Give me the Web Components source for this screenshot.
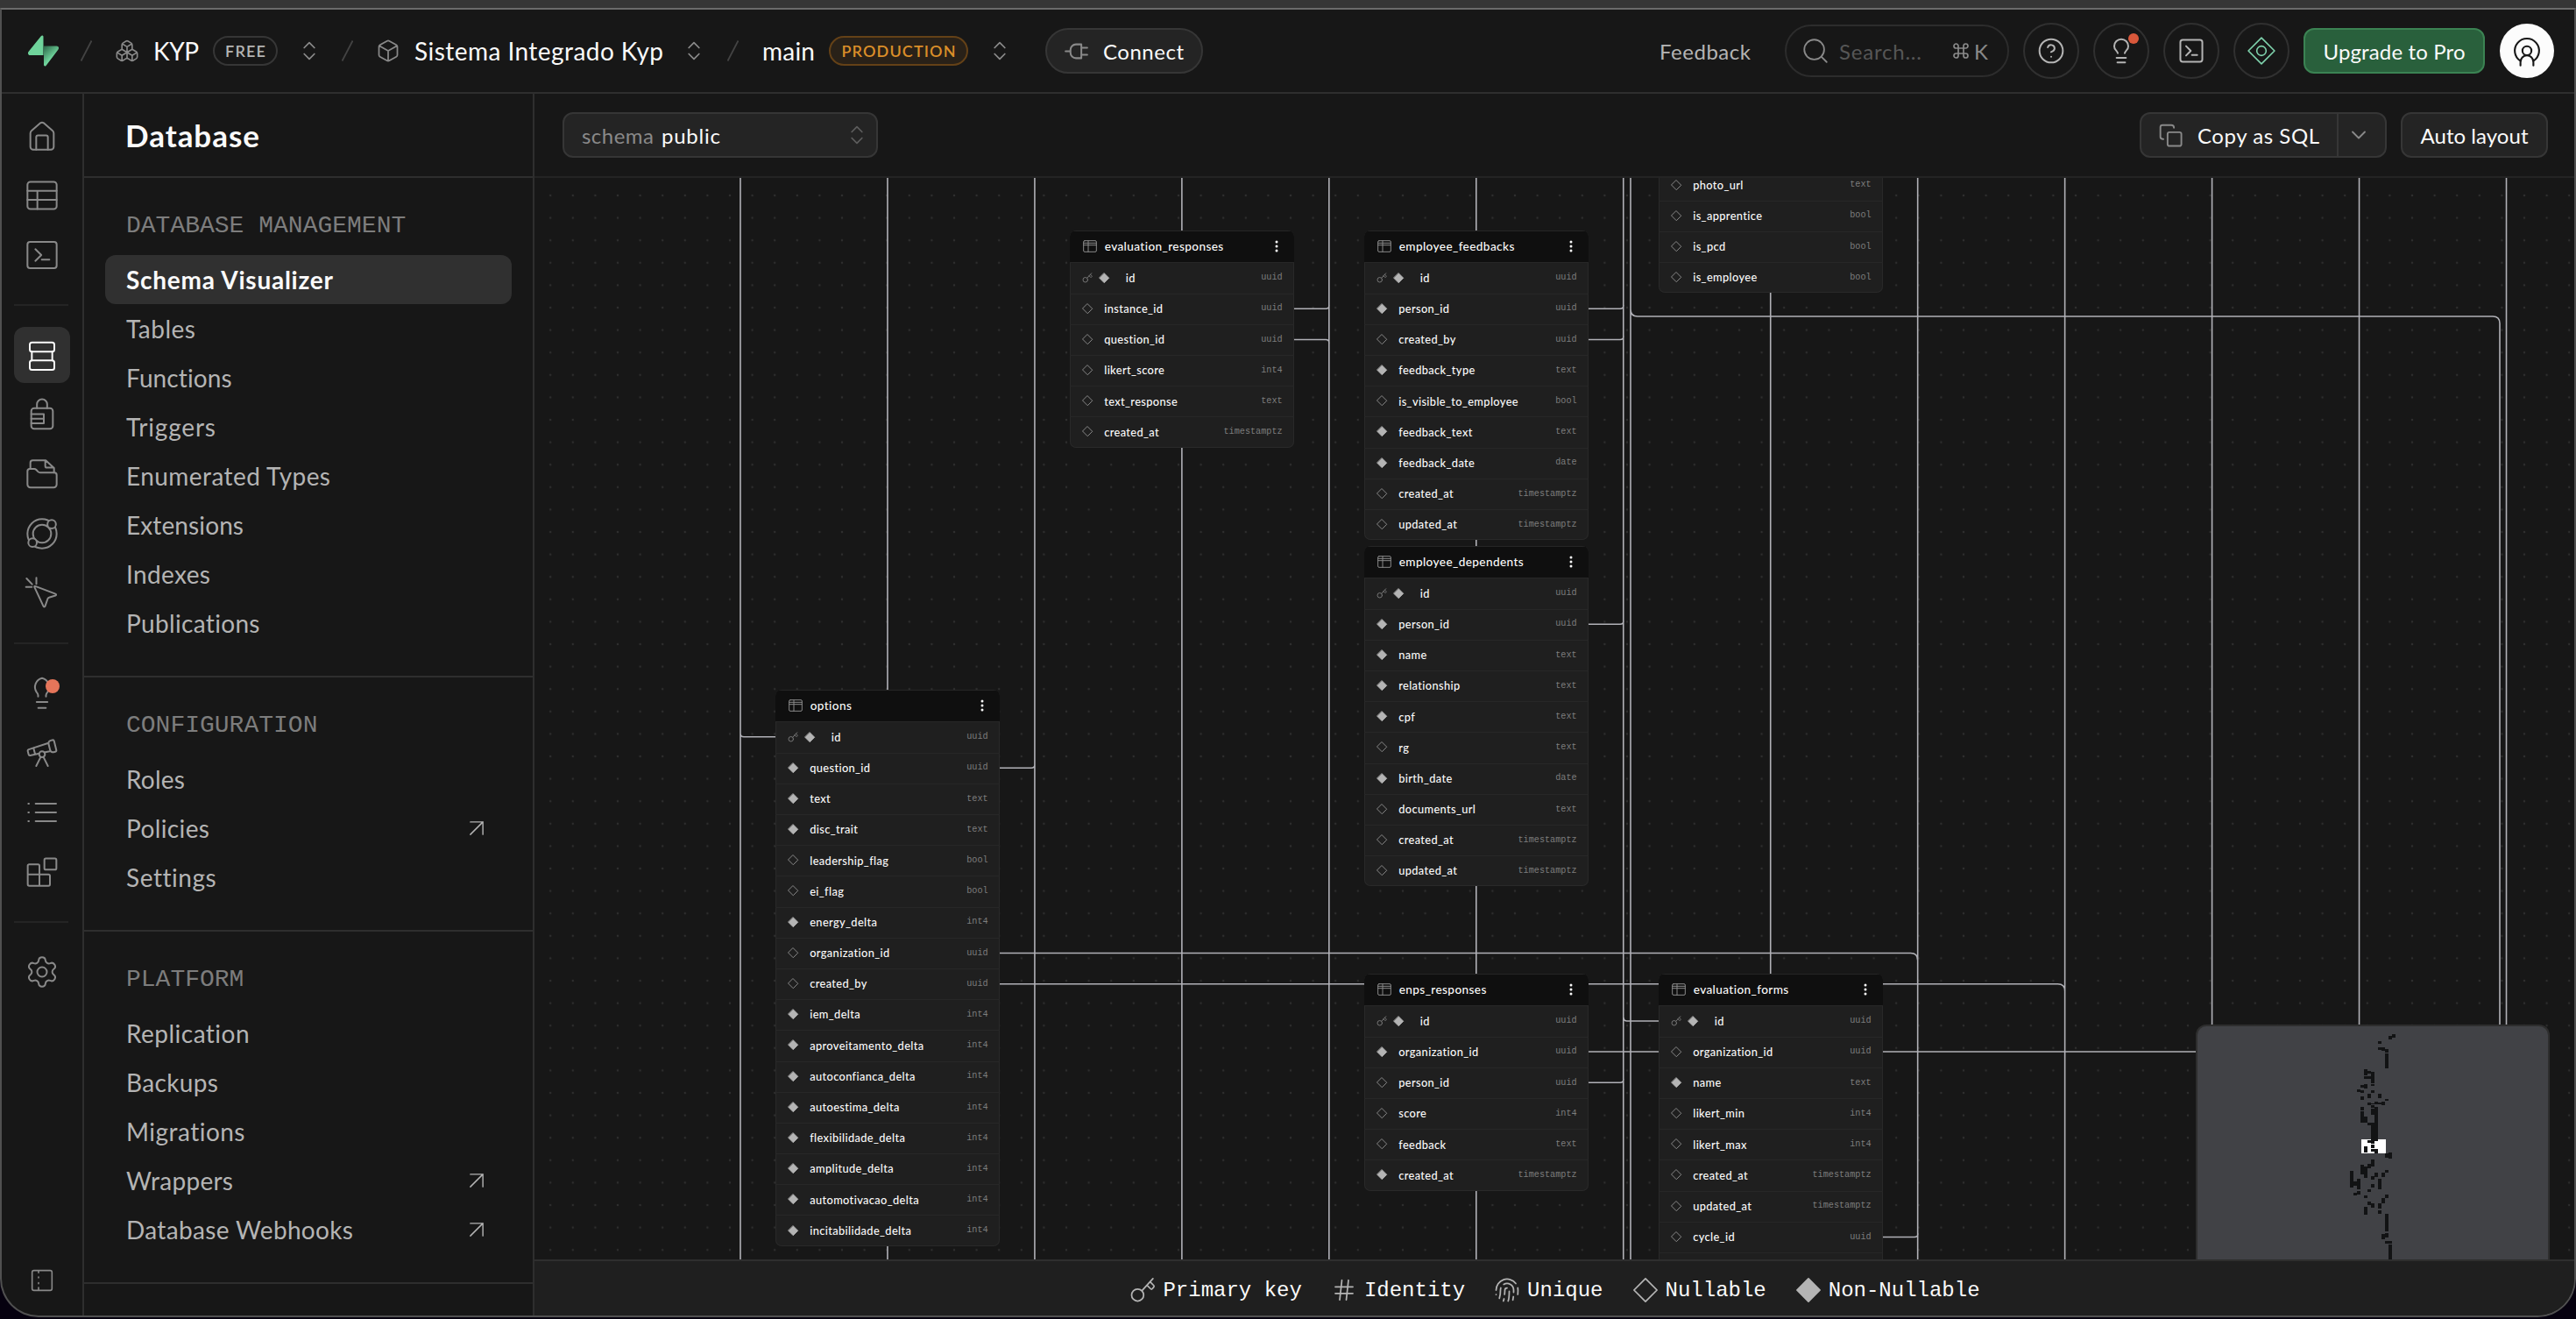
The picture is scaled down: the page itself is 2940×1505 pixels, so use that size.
<!DOCTYPE html>
<html lang="en">
<head>
<meta charset="utf-8">
<title>Schema Visualizer</title>
<style>
  html, body {
    margin: 0;
    height: 100%;
    overflow: hidden;
    background: #06010f;
    color: #fafafa;
    font-family: Lato, "Open Sans", sans-serif;
  }
</style>
</head>
<body>
<studio-app></studio-app>

<script>
// 24x24 icon set, drawn with currentColor strokes
const DOOR = "M4 10.2c0-.7.3-1.3.9-1.8l6-5.2c.7-.5 1.5-.5 2.2 0l6 5.2c.6.5.9 1.1.9 1.8v9.3a2 2 0 0 1-2 2H6a2 2 0 0 1-2-2z";
const ICONS = {
  home: `<path d="${DOOR}"/><path d="M8 21.5v-8.6a1.2 1.2 0 0 1 1.2-1.2h5.6a1.2 1.2 0 0 1 1.2 1.2v8.6"/>`,
  table: `<rect x="2" y="2.7" width="20" height="18.6" rx="2"/><path d="M2 8.8h20M2 15h20M8.8 8.8v12.5"/>`,
  terminal: `<rect x="2" y="3" width="20" height="18" rx="1.8"/><path d="m7.4 8 4.1 4-4.1 4M11.8 15.2H17"/>`,
  database: `<rect x="3.6" y="3.4" width="16.8" height="6.4" rx="1.5"/><rect x="3.6" y="15.8" width="16.8" height="6.4" rx="1.5"/><path d="M5 9.8v6M19 9.8v6"/>`,
  lock: `<rect x="4.6" y="7.6" width="14.8" height="14.2" rx="2"/><path d="M8.5 7.6V5a3.5 3.5 0 0 1 7 0v2.6M4.6 11.7h8.6v6.3H4.6M4.6 14.9h8.6"/>`,
  folder: `<path d="M2 10c0-.9.7-1.6 1.6-1.6h3c.6 0 1 .2 1.4.6l1.2 1.3c.4.4.9.7 1.5.7h9.7c.9 0 1.6.7 1.6 1.6v6.5a2 2 0 0 1-2 2H4a2 2 0 0 1-2-2z"/><path d="M4 8.4V4.2c0-.9.7-1.6 1.6-1.6h8.9l5.7 5.2V11M14.2 2.6v3.8c0 .6.5 1.1 1.1 1.1h4.7"/>`,
  realtime: `<circle cx="12" cy="12" r="10"/><circle cx="12" cy="12" r="6.2"/><circle cx="18.6" cy="5.5" r="2.9" fill="#171717"/><circle cx="5.5" cy="18.1" r="2.9" fill="#171717"/>`,
  cursor: `<path d="m1.4 1.8 3.8 4M8.1 1.3v4.3M1 7.7h4M7.4 7.1l13.8 5.3c.6.2.6.9 0 1.1l-4.4 1.3c-.4.1-.7.4-.9.8l-1.8 5.2c-.2.6-1 .6-1.2 0L6.8 7.7c-.2-.4.2-.8.6-.6z"/>`,
  bulb: `<path d="M9.3 14.3v-.9c0-.8-.4-1.5-1-2.1A6.3 6.3 0 0 1 12 1.6a6.3 6.3 0 0 1 3.7 9.7c-.6.6-1 1.3-1 2.1v.9M8.3 18h7.4M9.4 22h5.2"/>`,
  telescope: `<path d="m10.065 12.493-6.18 1.318a.934.934 0 0 1-1.108-.702l-.537-2.15a1.07 1.07 0 0 1 .691-1.265l13.504-4.44M13.56 11.747l4.332-.924M16 21l-3.105-6.21M16.485 5.94a2 2 0 0 1 1.455-2.425l1.09-.272a1 1 0 0 1 1.212.727l1.515 6.06a1 1 0 0 1-.727 1.213l-1.09.272a2 2 0 0 1-2.425-1.455zM6.158 8.633l1.114 4.456M8 21l3.105-6.21"/><circle cx="12" cy="13" r="2"/>`,
  list: `<path d="M2.6 6h.4M2.6 12h.4M2.6 18h.4M7.6 6h14M7.6 12h14M7.6 18h14"/>`,
  blocks: `<rect x="13.6" y="2.7" width="8.2" height="7.7" rx="1"/><path d="M10.2 21.4V7.7a1 1 0 0 0-1-1H3.2a1 1 0 0 0-1 1v12.7a1 1 0 0 0 1 1h13.2a1 1 0 0 0 1-1v-5.7a1 1 0 0 0-1-1H2.2"/>`,
  gear: `<path d="M9.671 4.136a2.34 2.34 0 0 1 4.659 0 2.34 2.34 0 0 0 3.319 1.915 2.34 2.34 0 0 1 2.33 4.033 2.34 2.34 0 0 0 0 3.831 2.34 2.34 0 0 1-2.33 4.033 2.34 2.34 0 0 0-3.319 1.915 2.34 2.34 0 0 1-4.659 0 2.34 2.34 0 0 0-3.32-1.915 2.34 2.34 0 0 1-2.33-4.033 2.34 2.34 0 0 0 0-3.831A2.34 2.34 0 0 1 6.35 6.051a2.34 2.34 0 0 0 3.319-1.915"/><circle cx="12" cy="12" r="3.3"/>`,
  panel: `<rect x="3.5" y="3.5" width="17" height="17" rx="1.6"/><path d="M9 14v.8M9 18v2.4M9 3.6v1.8M9 9v.8"/>`,
  boxes: `<path d="M2.97 12.92A2 2 0 0 0 2 14.63v3.24a2 2 0 0 0 .97 1.71l3 1.8a2 2 0 0 0 2.06 0L12 19v-5.5l-5-3zM7 16.5l-4.74-2.85M7 16.5l5-3M7 16.5v5.17M12 13.5V19l3.97 2.38a2 2 0 0 0 2.06 0l3-1.8a2 2 0 0 0 .97-1.71v-3.24a2 2 0 0 0-.97-1.71L17 10.5zM17 16.5l-5-3M17 16.5l4.74-2.85M17 16.5v5.17M7.97 4.42A2 2 0 0 0 7 6.13v4.37l5 3 5-3V6.13a2 2 0 0 0-.97-1.71l-3-1.8a2 2 0 0 0-2.06 0zM12 8 7.26 5.15M12 8l4.74-2.85M12 13.5V8"/>`,
  cube: `<path d="M21 8a2 2 0 0 0-1-1.73l-7-4a2 2 0 0 0-2 0l-7 4A2 2 0 0 0 3 8v8a2 2 0 0 0 1 1.73l7 4a2 2 0 0 0 2 0l7-4A2 2 0 0 0 21 16zM3.3 7l8.7 5 8.7-5M12 22V12"/>`,
  updown: `<path d="m7 15 5 5 5-5M7 9l5-5 5 5"/>`,
  down: `<path d="m6 9 6 6 6-6"/>`,
  plug: `<path d="M1 12h5M17 5v14h-5.5a5.5 5.5 0 0 1-5.5-5.5v-3a5.5 5.5 0 0 1 5.5-5.5zM17 8.5h6M17 15.5h6"/>`,
  search: `<circle cx="11" cy="11" r="8"/><path d="m21 21-4.3-4.3"/>`,
  help: `<circle cx="12" cy="12" r="10"/><path d="M9.09 9a3 3 0 0 1 5.83 1c0 2-3 3-3 3M12 17h.01"/>`,
  lightbulb: `<path d="M15 14c.2-1 .7-1.7 1.5-2.5 1-.9 1.5-2.2 1.5-3.5A6 6 0 0 0 6 8c0 1 .2 2.2 1.5 3.5.7.7 1.3 1.5 1.5 2.5M8 18h8M8.7 22h6.6"/>`,
  console: `<rect x="2.6" y="2.6" width="18.8" height="18.8" rx="2"/><path d="m7.5 8 4 4-4 4M12.5 15.5H17"/>`,
  assistant: `<path d="M12 .8 23.2 12 12 23.2.8 12z"/><circle cx="12" cy="12" r="4"/>`,
  person: `<path d="M6.1 21.3a11.1 11.1 0 1 1 11.8 0M6.1 25.3v-2.9c0-3.700 2.500-6.200 5.900-6.200s5.900 2.500 5.900 6.200v2.900"/><circle cx="12" cy="11.9" r="4.1"/>`,
  copy: `<rect x="9" y="9" width="13" height="13" rx="1.8"/><path d="M5 15.5c-1.6 0-2.8-.9-2.8-2V4.2c0-1.1.9-2 2-2h8.3c1.5 0 2.5 1 2.5 2.5"/>`,
  external: `<path d="M2.5 2.5h19v19M2.5 21.5l19-19"/>`,
  key: `<circle cx="7.5" cy="16.5" r="5.5"/><path d="m11.5 12.5 10-11M16 7.5l3.3 3.3c.6.6 1.2.5 1.6 0l1.3-1.5c.5-.5.4-1 0-1.5L19 4.5"/>`,
  hash: `<path d="M4 9h16M4 15h16M10 3 8 21M16 3l-2 18"/>`,
  finger: `<path d="M12 10a2 2 0 0 0-2 2c0 1.02-.1 2.51-.26 4M14 13.12c0 2.38 0 6.38-1 8.88M17.29 21.02c.12-.6.43-2.3.5-3.02M2 12a10 10 0 0 1 18-6M2 16h.01M21.8 16c.2-2 .131-5.354 0-6M5 19.5C5.5 18 6 15 6 12a6 6 0 0 1 .34-2M8.65 22c.21-.66.45-1.32.57-2M9 6.8a6 6 0 0 1 9 5.2v2"/>`,
  diamond: `<path d="M12 1.5 22.5 12 12 22.5 1.5 12z"/>`,
  solid: `<path fill="currentColor" d="M12 1.5 22.5 12 12 22.5 1.5 12z"/>`,
  grid: `<rect x="1" y="2.5" width="22" height="19" rx="2"/><path d="M1 6.5h22M1 10h22M9 2.5v19"/>`
};

class UiIcon extends HTMLElement {
  constructor() {
    super();
    this.attachShadow({ mode: "open" });
  }

  connectedCallback() {
    const size = this.getAttribute("size") || 40;
    const stroke = this.getAttribute("stroke") || 1.2;
    this.shadowRoot.innerHTML = `
      <style>
        :host { display: block; flex: none; width: ${size}px; height: ${size}px; }
        svg { display: block; overflow: visible; }
      </style>
      <svg width="${size}" height="${size}" viewBox="0 0 24 24" fill="none" stroke="currentColor"
        stroke-width="${stroke}" stroke-linecap="round" stroke-linejoin="round">${ICONS[this.getAttribute("name")]}</svg>
    `;
  }
}
customElements.define("ui-icon", UiIcon);

// Text that is tracked to a given width
class UiLabel extends HTMLElement {
  constructor() {
    super();
    this.attachShadow({ mode: "open" });
    this.shadowRoot.innerHTML = `
      <style>
        :host { display: block; flex: none; white-space: nowrap; }
        span { display: inline-block; }
      </style>
      <span><slot></slot></span>
    `;
  }

  connectedCallback() {
    const width = Number(this.getAttribute("w"));
    const span = this.shadowRoot.querySelector("span");
    const natural = span.getBoundingClientRect().width;
    const gaps = this.textContent.length - 1;
    this.style.width = `${width}px`;
    span.style.letterSpacing = `${(width - natural) / gaps}px`;
  }
}
customElements.define("ui-label", UiLabel);

class UiButton extends HTMLElement {
  constructor() {
    super();
    this.attachShadow({ mode: "open" });
    this.shadowRoot.innerHTML = `
      <style>
        :host {
          display: flex;
          flex: none;
          box-sizing: border-box;
          align-items: center;
          justify-content: center;
          height: 52px;
          border: 2px solid #363636;
          border-radius: 12px;
          background: #242424;
          font-size: 24px;
        }
        :host([kind="pill"]) { border-radius: 26px; }
        :host([kind="round"]) {
          position: relative;
          width: 64px;
          height: 64px;
          border-radius: 50%;
          border-color: #303030;
          background: none;
          color: #b4b4b4;
        }
        :host([kind="primary"]) { background: #29603c; border-color: #3b8353; }
      </style>
      <slot></slot>
    `;
  }
}
customElements.define("ui-button", UiButton);

class UiBadge extends HTMLElement {
  constructor() {
    super();
    this.attachShadow({ mode: "open" });
    this.shadowRoot.innerHTML = `
      <style>
        :host {
          display: flex;
          flex: none;
          box-sizing: border-box;
          align-items: center;
          justify-content: center;
          height: 34px;
          border: 2px solid #363636;
          border-radius: 17px;
          font-size: 18px;
          font-weight: 600;
          color: #b4b4b4;
        }
        :host([kind="warning"]) {
          color: #db8e29;
          border-color: #644117;
          background: #292118;
        }
      </style>
      <slot></slot>
    `;
  }
}
customElements.define("ui-badge", UiBadge);

class AppHeader extends HTMLElement {
  constructor() {
    super();
    this.attachShadow({ mode: "open" });
    const slash = (gap) =>
      `<svg style="margin-left:${gap}px" width="13" height="24" stroke="#434343" stroke-width="1.8"><path d="M12.5.5.5 23.5"/></svg>`;
    const updown = (gap) =>
      `<ui-icon name="updown" size="28" stroke="1.5" style="margin-left:${gap}px"></ui-icon>`;

    this.shadowRoot.innerHTML = `
      <style>
        :host {
          display: flex;
          flex: none;
          align-items: center;
          height: 94px;
          padding-right: 23px;
          border-bottom: 2px solid #2e2e2e;
          font-size: 28px;
        }
        svg { display: block; flex: none; }
        ui-icon { color: #898989; }
        .light { color: #b4b4b4; font-size: 24px; }
        .search {
          display: flex;
          align-items: center;
          box-sizing: border-box;
          width: 256px;
          height: 60px;
          margin: 0 16px 0 39px;
          padding-left: 16px;
          border: 2px solid #2c2c2c;
          border-radius: 30px;
          color: #565656;
          font-size: 24px;
        }
        .keys { color: #898989; margin-left: 36px; display: flex; gap: 6px; align-items: center; }
        .tools { display: flex; gap: 16px; }
        .tools ui-icon { color: #b4b4b4; }
        .tools .green { color: #7fd3ad; }
        .dot {
          position: absolute;
          left: 38px;
          top: 10px;
          width: 12px;
          height: 12px;
          border-radius: 50%;
          background: #d9583b;
        }
        .avatar {
          display: flex;
          align-items: center;
          justify-content: center;
          width: 62px;
          height: 62px;
          margin-left: 17px;
          border-radius: 50%;
          background: #fcfcfc;
        }
        .avatar ui-icon { color: #171717; }
      </style>
      <svg style="margin-left:30px" width="35" height="36" viewBox="0 0 35 36">
        <defs>
          <linearGradient id="shade" x1="18" y1="14" x2="28" y2="25" gradientUnits="userSpaceOnUse">
            <stop stop-color="#2f6b4c"/><stop offset="1" stop-color="#6fd39b"/>
          </linearGradient>
        </defs>
        <path fill="url(#shade)" d="M18 12.500h14.500c2.300 0 3.300 2.400 1.800 4.200L20.500 35c-.9 1.100-2.500.5-2.500-.9z"/>
        <path fill="#6fd39b" d="M17.500 23H2.500C.2 23-.8 20.600.7 18.800L15 1c.9-1.100 2.500-.5 2.500.9z"/>
      </svg>
      ${slash(25)}
      <ui-icon name="boxes" size="28" stroke="1.4" style="margin-left:26px"></ui-icon>
      <ui-label w="52" style="margin-left:16px">KYP</ui-label>
      <ui-badge style="width:74px;margin-left:16px"><ui-label w="46">FREE</ui-label></ui-badge>
      ${updown(22)}
      ${slash(23)}
      <ui-icon name="cube" size="28" stroke="1.5" style="margin-left:26px"></ui-icon>
      <ui-label w="284" style="margin-left:16px">Sistema Integrado Kyp</ui-label>
      ${updown(21)}
      ${slash(24)}
      <ui-label w="60" style="margin-left:27px">main</ui-label>
      <ui-badge kind="warning" style="width:159px;margin-left:16px"><ui-label w="130">PRODUCTION</ui-label></ui-badge>
      ${updown(22)}
      <ui-button kind="pill" style="width:180px;margin-left:38px">
        <ui-icon name="plug" size="27" stroke="1.8"></ui-icon>
        <ui-label w="92" style="margin-left:17px">Connect</ui-label>
      </ui-button>

      <ui-label w="104" class="light" style="margin-left:auto">Feedback</ui-label>
      <div class="search">
        <ui-icon name="search" size="34" stroke="1.3"></ui-icon>
        <ui-label w="94" style="margin-left:10px">Search...</ui-label>
        <div class="keys">
          <svg width="18" height="18" viewBox="0 0 18 18" fill="none" stroke="currentColor" stroke-width="1.7">
            <path d="M6 6h6v6H6zM6 6H3.500A2.500 2.500 0 1 1 6 3.500zM12 6V3.500A2.500 2.500 0 1 1 14.500 6zM12 12h2.500a2.500 2.500 0 1 1-2.500 2.500zM6 12v2.500A2.500 2.500 0 1 1 3.500 12z"/>
          </svg>
          <span>K</span>
        </div>
      </div>
      <div class="tools">
        <ui-button kind="round"><ui-icon name="help" size="32" stroke="1.5"></ui-icon></ui-button>
        <ui-button kind="round"><ui-icon name="lightbulb" size="32" stroke="1.5"></ui-icon><span class="dot"></span></ui-button>
        <ui-button kind="round"><ui-icon name="console" size="32" stroke="1.5"></ui-icon></ui-button>
        <ui-button kind="round"><ui-icon class="green" name="assistant" size="32" stroke="1.2"></ui-icon></ui-button>
      </div>
      <ui-button kind="primary" style="width:207px;margin-left:16px"><ui-label w="162">Upgrade to Pro</ui-label></ui-button>
      <div class="avatar"><ui-icon name="person" size="30" stroke="1.7"></ui-icon></div>
    `;
  }
}
customElements.define("app-header", AppHeader);

class NavRail extends HTMLElement {
  constructor() {
    super();
    this.attachShadow({ mode: "open" });
    const groups = [
      ["home", "table", "terminal"],
      ["database", "lock", "folder", "realtime", "cursor"],
      ["bulb", "telescope", "list", "blocks"],
      ["gear"]
    ];
    this.shadowRoot.innerHTML = `
      <style>
        :host {
          display: flex;
          flex: none;
          flex-direction: column;
          box-sizing: border-box;
          width: 94px;
          padding: 16px 14px 24px;
          border-right: 2px solid #2e2e2e;
          color: #898989;
        }
        nav { display: flex; flex-direction: column; gap: 4px; }
        hr { width: 62px; height: 2px; margin: 24px 0; border: 0; background: #242424; }
        .item {
          position: relative;
          display: flex;
          align-items: center;
          justify-content: center;
          width: 64px;
          height: 64px;
          border-radius: 12px;
        }
        .database { background: #303030; color: #fafafa; }
        .bulb::after {
          content: "";
          position: absolute;
          left: 36px;
          top: 16px;
          width: 16px;
          height: 16px;
          border-radius: 50%;
          background: #e5755a;
        }
        .foot { margin: auto 0 0 16px; }
      </style>
      ${groups
        .map((names) => `<nav>${names.map((n) => `<div class="item ${n}"><ui-icon name="${n}"></ui-icon></div>`).join("")}</nav>`)
        .join("<hr>")}
      <ui-icon class="foot" name="panel" size="32" stroke="1.2"></ui-icon>
    `;
  }
}
customElements.define("nav-rail", NavRail);

class SideMenu extends HTMLElement {
  constructor() {
    super();
    this.attachShadow({ mode: "open" });
    // [label, width, opens elsewhere]
    const sections = [
      ["DATABASE MANAGEMENT", [
        ["Schema Visualizer", 236], ["Tables", 79], ["Functions", 121], ["Triggers", 102],
        ["Enumerated Types", 233], ["Extensions", 134], ["Indexes", 96], ["Publications", 153]
      ]],
      ["CONFIGURATION", [["Roles", 67], ["Policies", 95, true], ["Settings", 102]]],
      ["PLATFORM", [
        ["Replication", 141], ["Backups", 105], ["Migrations", 136], ["Wrappers", 122, true], ["Database Webhooks", 259, true]
      ]]
    ];
    this.shadowRoot.innerHTML = `
      <style>
        :host {
          display: flex;
          flex: none;
          flex-direction: column;
          box-sizing: border-box;
          width: 514px;
          border-right: 2px solid #2e2e2e;
          font-size: 28px;
          color: #b4b4b4;
        }
        header {
          display: flex;
          align-items: center;
          height: 94px;
          padding-left: 47px;
          border-bottom: 2px solid #2e2e2e;
          color: #fafafa;
          font-size: 35px;
          font-weight: 700;
        }
        section { padding: 39px 24px 32px; border-bottom: 2px solid #2e2e2e; }
        h2 {
          margin: 0 0 17px 24px;
          font: 400 28px/32px "Liberation Mono", monospace;
          color: #7d7d7d;
        }
        .item {
          display: flex;
          align-items: center;
          justify-content: space-between;
          height: 56px;
          padding: 0 31px 0 24px;
          border-radius: 12px;
        }
        .active { background: #303030; color: #fafafa; font-weight: 700; }
      </style>
      <header><ui-label w="153">Database</ui-label></header>
      ${sections
        .map(([title, items]) => `
          <section>
            <h2>${title}</h2>
            ${items
              .map(([text, w, ext]) => `
                <div class="item${text === "Schema Visualizer" ? " active" : ""}">
                  <ui-label w="${w}">${text}</ui-label>
                  ${ext ? `<ui-icon name="external" size="18" stroke="1.9"></ui-icon>` : ""}
                </div>`)
              .join("")}
          </section>`)
        .join("")}
    `;
  }
}
customElements.define("side-menu", SideMenu);

class CanvasToolbar extends HTMLElement {
  constructor() {
    super();
    this.attachShadow({ mode: "open" });
    this.shadowRoot.innerHTML = `
      <style>
        :host {
          display: flex;
          flex: none;
          align-items: center;
          box-sizing: border-box;
          height: 96px;
          padding: 0 30px 0 32px;
          border-bottom: 2px solid #242424;
        }
        ui-icon { color: #898989; }
        .select { width: 360px; justify-content: flex-start; padding-left: 20px; }
        .select ui-label:first-child { color: #898989; }
        .split { width: 282px; margin-left: auto; justify-content: flex-start; }
        .divider { width: 2px; height: 48px; margin-left: 20px; background: #363636; }
        .auto { width: 168px; margin-left: 16px; }
      </style>
      <ui-button class="select">
        <ui-label w="82">schema</ui-label>
        <ui-label w="67" style="margin-left:9px">public</ui-label>
        <ui-icon name="updown" size="28" stroke="1.5" style="margin:0 8px 0 auto;color:#5c5c5c"></ui-icon>
      </ui-button>
      <ui-button class="split">
        <ui-icon name="copy" size="29" stroke="1.6" style="margin-left:19px"></ui-icon>
        <ui-label w="139" style="margin-left:16px">Copy as SQL</ui-label>
        <div class="divider"></div>
        <ui-icon name="down" size="28" stroke="1.6" style="margin-left:9px"></ui-icon>
      </ui-button>
      <ui-button class="auto"><ui-label w="123">Auto layout</ui-label></ui-button>
    `;
  }
}
customElements.define("canvas-toolbar", CanvasToolbar);

// Each column reads "flag name type"; flags: p = primary key, n = nullable, r = required
class TableNode extends HTMLElement {
  constructor() {
    super();
    this.attachShadow({ mode: "open" });
  }

  connectedCallback() {
    const title = this.getAttribute("title-text");
    const rows = this.getAttribute("columns").split(",").map((c) => c.trim().split(" "));
    this.shadowRoot.innerHTML = `
      <style>
        :host {
          display: block;
          box-sizing: border-box;
          width: 256px;
          overflow: hidden;
          border-radius: 7px;
          background: #1f1f1f;
          box-shadow: inset 0 0 0 1px #292929;
          font-size: 12.8px;
          font-weight: 500;
        }
        header {
          display: flex;
          align-items: center;
          box-sizing: border-box;
          height: 36.2px;
          padding: 0 17px 0 15px;
          background: #0f0f0f;
          box-shadow: inset 0 1px #262626;
          font-size: 13.6px;
          letter-spacing: .4px;
        }
        header ui-icon { color: #898989; margin-right: 8.5px; }
        header svg { margin-left: auto; }
        .row {
          display: flex;
          align-items: center;
          box-sizing: border-box;
          height: 35.2px;
          padding: 0 13.5px 1.6px;
          border-top: 1.6px solid #272727;
        }
        .name { margin-left: 13px; letter-spacing: .38px; }
        .primary .name { margin-left: 18.5px; }
        ui-icon { color: #b4b4b4; }
        .nullable { color: #898989; }
        .key { color: #777; margin-right: 7px; }
        .type { margin-left: auto; color: #7d7d7d; font: 10.2px "Liberation Mono", monospace; }
      </style>
      ${title ? `
        <header>
          <ui-icon name="grid" size="16" stroke="1.5"></ui-icon>${title}
          <svg width="6" height="14" fill="#fafafa"><circle cx="3" cy="2" r="1.5"/><circle cx="3" cy="7" r="1.5"/><circle cx="3" cy="12" r="1.5"/></svg>
        </header>` : ""}
      ${rows
        .map(([flag, name, type]) => name ? `
          <div class="row${flag === "p" ? " primary" : ""}">
            ${flag === "p" ? `<ui-icon class="key" name="key" size="12" stroke="2"></ui-icon>` : ""}
            ${flag === "n"
              ? `<ui-icon class="nullable" name="diamond" size="12.5" stroke="1.9"></ui-icon>`
              : `<ui-icon name="solid" size="12.5" stroke="1.6"></ui-icon>`}
            <span class="name">${name}</span>
            <span class="type">${type}</span>
          </div>` : `<div class="row"></div>`)
        .join("")}
    `;
  }
}
customElements.define("table-node", TableNode);

class MiniMap extends HTMLElement {
  constructor() {
    super();
    this.attachShadow({ mode: "open" });
    const nodes = `1060,155,9,12 1069,150,10,12 1031,174,10,8 1031,195,19,9 1050,201,10,12 1041,201,10,6 1050,216,10,50
      993,270,10,20 1003,277,9,8 993,294,20,8 1012,279,10,39 1012,321,10,6 984,324,10,9 993,321,10,15 974,339,10,9
      984,342,10,8 1012,342,10,8 1003,354,9,15 1031,354,10,15 984,363,9,11 1050,372,10,6 1003,384,9,8 1012,387,10,4
      1022,381,9,9 1031,384,10,6 1041,381,9,11 1012,393,10,9 984,399,9,12 1012,405,10,20 1022,399,9,117 984,414,9,39
      993,432,10,21 1003,453,9,9 1012,453,11,60 1003,513,19,8 1012,516,10,9 1012,528,10,12 993,534,10,20 1012,543,11,8
      1022,543,9,15 1050,558,10,15 1060,555,9,21 1012,579,10,24 1003,594,9,15 984,597,9,33 993,603,10,38 955,618,10,56
      965,654,19,14 974,645,10,36 1022,624,9,15 1012,636,10,12 1041,624,9,15 1050,615,10,9 1012,663,10,12 1031,645,10,36
      1003,681,9,9 974,687,10,12 965,693,9,9 993,702,10,9 1050,699,10,12 1041,711,9,18 1003,723,9,12 1012,729,10,15
      1031,729,10,17 993,741,10,27 1031,753,10,12 1050,765,10,60 1041,834,10,17 1050,831,10,15 1050,858,19,9 1060,870,9,60`;
    this.shadowRoot.innerHTML = `
      <style>
        :host {
          display: block;
          box-sizing: border-box;
          overflow: hidden;
          border: 2px solid #2e2e2e;
          border-bottom: 0;
          border-radius: 12px 12px 0 0;
          background: #414246;
        }
        svg { display: block; }
      </style>
      <svg width="400" height="267" viewBox="542 123 950 801" preserveAspectRatio="none" shape-rendering="crispEdges">
        <rect x="986" y="510" width="66" height="48" fill="#fff"/>
        ${nodes.split(/\s+/).map((n) => {
          const [x, y, w, h] = n.split(",");
          return `<rect x="${x}" y="${y}" width="${w}" height="${h}" fill="#121314"/>`;
        }).join("")}
      </svg>
    `;
  }
}
customElements.define("mini-map", MiniMap);

class SchemaCanvas extends HTMLElement {
  constructor() {
    super();
    this.attachShadow({ mode: "open" });
    const nodes = [
      [1893.2, 193.5, "", "n photo_url text,n is_apprentice bool,n is_pcd bool,n is_employee bool"],
      [1221.2, 263.3, "evaluation_responses", "p id uuid,n instance_id uuid,n question_id uuid,n likert_score int4,n text_response text,n created_at timestamptz"],
      [1557.2, 263.3, "employee_feedbacks", "p id uuid,r person_id uuid,n created_by uuid,r feedback_type text,n is_visible_to_employee bool,r feedback_text text,r feedback_date date,n created_at timestamptz,n updated_at timestamptz"],
      [1557.2, 623.3, "employee_dependents", "p id uuid,r person_id uuid,r name text,r relationship text,r cpf text,n rg text,r birth_date date,n documents_url text,n created_at timestamptz,n updated_at timestamptz"],
      [885.2, 787.3, "options", "p id uuid,r question_id uuid,r text text,r disc_trait text,n leadership_flag bool,n ei_flag bool,r energy_delta int4,n organization_id uuid,n created_by uuid,r iem_delta int4,r aproveitamento_delta int4,r autoconfianca_delta int4,r autoestima_delta int4,r flexibilidade_delta int4,r amplitude_delta int4,r automotivacao_delta int4,r incitabilidade_delta int4"],
      [1557.2, 1111.3, "enps_responses", "p id uuid,r organization_id uuid,n person_id uuid,n score int4,n feedback text,r created_at timestamptz"],
      [1893.2, 1111.3, "evaluation_forms", "p id uuid,n organization_id uuid,r name text,n likert_min int4,n likert_max int4,n created_at timestamptz,n updated_at timestamptz,n cycle_id uuid,-"]
    ];
    const columns = [...Array(13).keys()].map((i) => `M${845 + 167.96 * i} 200V1440`);
    const edges = [
      ...columns,
      "M1861 200V1440",
      "M1861 200V353q0 8 8 8H2845q8 0 8 8V1440",
      "M1477 352.3h36q4 0 4-4", "M1477 387.5h36q4 0 4 4",
      "M1813 352.3h36q4 0 4-4", "M1813 387.5h36q4 0 4-4", "M1813 712.3h36q4 0 4-4",
      "M885 840.7h-36q-4 0-4-4", "M1141 876.2h36q4 0 4-4",
      "M1141 1087.5H2180.6q8 0 8 8", "M1141 1122.7H2348.6q8 0 8 8",
      "M1813 1200H2520", "M1813 1235.3h36q4 0 4-4", "M1893 1165h-36q-4 0-4-4",
      "M2149 1411.5h36q4 0 4-4"
    ];
    this.shadowRoot.innerHTML = `
      <style>
        :host {
          position: relative;
          display: block;
          flex: 1;
          min-height: 0;
          overflow: hidden;
          background: #171717;
        }
        svg, table-node, mini-map { position: absolute; }
        svg { left: 0; top: 0; }
        mini-map { left: 1896px; top: 966px; width: 404px; height: 268px; }
      </style>
      <svg width="2328" height="1234" viewBox="610 203 2328 1234" fill="none">
        <pattern id="dots" x="820.2" y="210.2" width="25.6" height="25.6" patternUnits="userSpaceOnUse">
          <circle cx="12.8" cy="12.8" r="1.2" fill="#2e2e2e"/>
        </pattern>
        <rect x="610" y="203" width="2328" height="1234" fill="url(#dots)"/>
        <path d="${edges.join("")}" stroke="#b1b1b7" stroke-width="1.6"/>
      </svg>
      ${nodes
        .map(([x, y, title, cols]) =>
          `<table-node style="left:${x - 610}px;top:${y - 203}px" title-text="${title}" columns="${cols}"></table-node>`)
        .join("")}
      <mini-map></mini-map>
    `;
  }
}
customElements.define("schema-canvas", SchemaCanvas);

class SchemaLegend extends HTMLElement {
  constructor() {
    super();
    this.attachShadow({ mode: "open" });
    const items = [["key", "Primary key"], ["hash", "Identity"], ["finger", "Unique"], ["diamond", "Nullable"], ["solid", "Non-Nullable"]];
    this.shadowRoot.innerHTML = `
      <style>
        :host {
          display: flex;
          flex: none;
          align-items: center;
          justify-content: center;
          gap: 32px;
          height: 62px;
          border-top: 2px solid #2e2e2e;
          background: #1f1f1f;
          font: 24px "Liberation Mono", monospace;
        }
        div { display: flex; align-items: center; gap: 8px; padding: 4px 0 0 1px; }
        ui-icon { color: #b4b4b4; }
      </style>
      ${items.map(([icon, text]) => `<div><ui-icon name="${icon}" size="30" stroke="1.4"></ui-icon>${text}</div>`).join("")}
    `;
  }
}
customElements.define("schema-legend", SchemaLegend);

class StudioApp extends HTMLElement {
  constructor() {
    super();
    this.attachShadow({ mode: "open" });
    this.shadowRoot.innerHTML = `
      <style>
        :host { display: flex; flex-direction: column; height: 1505px; }
        .tabs { flex: none; height: 9px; background: #363636; }
        .window {
          display: flex;
          flex-direction: column;
          box-sizing: border-box;
          height: 1494px;
          overflow: hidden;
          border: 2px solid #505050;
          border-top-color: #6b6b6b;
          border-radius: 0 0 44px 44px;
          background: #171717;
        }
        .body { display: flex; flex: 1; min-height: 0; }
        main { display: flex; flex: 1; flex-direction: column; min-width: 0; }
        nav-rail, side-menu { overflow: hidden; }
      </style>
      <div class="tabs"></div>
      <div class="window">
        <app-header></app-header>
        <div class="body">
          <nav-rail></nav-rail>
          <side-menu></side-menu>
          <main>
            <canvas-toolbar></canvas-toolbar>
            <schema-canvas></schema-canvas>
            <schema-legend></schema-legend>
          </main>
        </div>
      </div>
    `;
  }
}
customElements.define("studio-app", StudioApp);
</script>
</body>
</html>
